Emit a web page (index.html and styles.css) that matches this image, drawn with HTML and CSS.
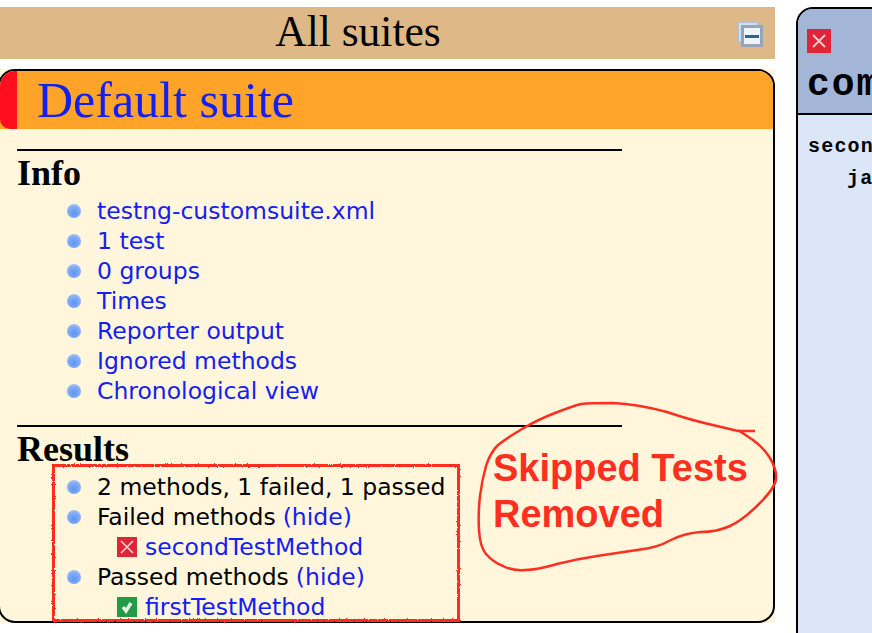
FILE: index.html
```html
<!DOCTYPE html>
<html lang="en">
<head>
    <meta charset="UTF-8">
    <title>TestNG reports</title>
    <link rel="stylesheet" href="styles.css">
</head>
<body>
    <div class="navigator">
        <div class="suites-title">
            <span>All suites</span>
            <svg class="collapse-icon" width="26" height="26" viewBox="0 0 26 26">
                <rect x="1" y="1" width="20" height="20" fill="#cfe0ee" stroke="#abc2d8" stroke-width="2"/>
                <rect x="5.5" y="5.5" width="19" height="19" fill="#eef5fb" stroke="#98a4b8" stroke-width="3"/>
                <rect x="8" y="14" width="14" height="3" fill="#2a6490"/>
            </svg>
        </div>
        <div class="suite-wrap">
            <div class="suite">
                <div class="suite-header">
                    <span class="suite-flag"></span>
                    <a class="suite-name">Default suite</a>
                </div>
                <div class="suite-body">
                    <div class="section">
                        <h3>Info</h3>
                        <ul>
                            <li><a>testng-customsuite.xml</a></li>
                            <li><a>1 test</a></li>
                            <li><a>0 groups</a></li>
                            <li><a>Times</a></li>
                            <li><a>Reporter output</a></li>
                            <li><a>Ignored methods</a></li>
                            <li><a>Chronological view</a></li>
                        </ul>
                    </div>
                    <div class="section">
                        <h3>Results</h3>
                        <ul>
                            <li>2 methods, 1 failed, 1 passed</li>
                            <li>Failed methods <a>(hide)</a></li>
                            <li class="method">
                                <svg class="status-icon" width="20" height="20" viewBox="0 0 20 20">
                                    <rect width="20" height="20" fill="#de2636"/>
                                    <path d="M4 4 L16 16 M16 4 L4 16" stroke="#f6cfd3" stroke-width="1.6"/>
                                </svg>
                                <a>secondTestMethod</a>
                            </li>
                            <li>Passed methods <a>(hide)</a></li>
                            <li class="method">
                                <svg class="status-icon" width="20" height="20" viewBox="0 0 20 20">
                                    <rect width="20" height="20" fill="#259a46"/>
                                    <path d="M6 10 L9 14 L14 6" fill="none" stroke="#e6f3e6" stroke-width="3.4"/>
                                </svg>
                                <a>firstTestMethod</a>
                            </li>
                        </ul>
                    </div>
                </div>
            </div>
        </div>
    </div>

    <div class="detail">
        <div class="detail-header">
            <svg class="detail-icon" width="24" height="24" viewBox="0 0 24 24">
                <rect width="24" height="24" fill="#de2636"/>
                <path d="M6 6 L18 18 M18 6 L6 18" stroke="#f6cfd3" stroke-width="1.8"/>
            </svg>
            <div class="detail-class">com</div>
        </div>
        <div class="detail-body">
            <div>secon</div>
            <div class="detail-trace">ja</div>
        </div>
    </div>

    <!-- annotations drawn on top of the screenshot -->
    <svg class="note-circle" width="872" height="633" viewBox="0 0 872 633">
        <filter id="rough">
            <feTurbulence type="fractalNoise" baseFrequency="0.7" numOctaves="2"/>
            <feDisplacementMap in="SourceGraphic" scale="2.5"/>
        </filter>
        <rect x="53.5" y="465.5" width="405" height="155" fill="none" stroke="#ff2f1f" stroke-width="3" filter="url(#rough)"/>
        <path d="M755 431 H738 L717 426 Q690 420 667 412 Q637 404 613 403 Q590 403 581 404 Q573 406 555 413 Q537 420 522 429 Q507 438 498 445 Q490 453 486 466 Q482 480 480 496 Q478 513 479 530 Q480 547 486 554 Q493 562 503 566 Q513 571 525 570 Q537 570 557 564 Q577 559 597 556 Q617 553 637 550 Q657 548 671 540 Q685 533 701 532 Q717 532 730 526 Q743 520 759 504 Q775 488 776 479 Q777 470 770 458 Q763 447 753 440 L738 430"
              fill="none" stroke="#ff2f1f" stroke-width="2.5"/>
    </svg>
    <div class="note-text">Skipped Tests<br>Removed</div>
</body>
</html>
```

FILE: styles.css
```css
html, body {
    height: 633px;
    overflow: hidden;
}

body {
    margin: 0;
    background-color: #fff;
    color: #000;
    font-family: "DejaVu Sans", sans-serif;
    display: flex;
    align-items: flex-start;
    gap: 21px;
    position: relative;
}

a {
    color: #1420f0;
}

.navigator {
    width: 775px;
    flex-shrink: 0;
    padding-top: 7px;
}

.suites-title {
    height: 52px;
    padding-right: 59px;
    background-color: #deb887;
    font-family: "Liberation Serif", serif;
    font-size: 43.5px;
    line-height: 48px;
    display: flex;
    justify-content: center;
    align-items: flex-start;
    position: relative;
}

.collapse-icon {
    position: absolute;
    top: 14px;
    right: 12px;
}

.suite-wrap {
    margin-top: 10px;
    height: 554px;
    background-color: #fff6dc;
    overflow: hidden;
}

.suite {
    margin-left: -2px;
    height: 550px;
    border: 2px solid #000;
    border-radius: 17px;
    overflow: hidden;
}

.suite-header {
    height: 58px;
    background-color: #ffa428;
    display: flex;
    align-items: center;
}

.suite-flag {
    width: 17px;
    height: 100%;
    background-color: #ff0f1e;
    border-radius: 0 0 0 10px;
}

.suite-name {
    margin-left: 20px;
    font-family: "Liberation Serif", serif;
    font-size: 50px;
    line-height: 58px;
}

.suite-body {
    padding: 20px 0 0 17px;
}

.section {
    width: 605px;
    border-top: 2px solid #000;
    margin-bottom: 19px;
}

.section h3 {
    margin: 0;
    font-family: "Liberation Serif", serif;
    font-size: 36px;
    line-height: 44px;
    font-weight: bold;
}

.section ul {
    margin: 0;
    padding: 1px 0 0 50px;
    list-style: none;
    font-size: 23.5px;
    line-height: 30px;
    white-space: nowrap;
}

.section li {
    display: flex;
    align-items: center;
    height: 30px;
    gap: 7px;
}

.section li:not(.method)::before {
    content: "";
    width: 14px;
    height: 14px;
    margin-right: 9px;
    border-radius: 50%;
    background: radial-gradient(circle at 50% 65%, #5c93f5 0%, #88b0f6 60%, #c9d9f5 100%);
    flex-shrink: 0;
}

.section li.method {
    padding-left: 50px;
    gap: 8px;
}

.detail {
    flex-shrink: 0;
    width: 120px;
    height: 640px;
    margin-top: 7px;
    border: 2px solid #000;
    border-radius: 17px 0 0 0;
    background-color: #dce6f9;
    overflow: hidden;
    font-family: "Liberation Mono", monospace;
    font-weight: bold;
}

.detail-header {
    height: 106px;
    padding: 20px 0 0 9px;
    box-sizing: border-box;
    background-color: #a3b6d8;
    border-bottom: 2px solid #000;
}

.detail-icon {
    display: block;
}

.detail-class {
    font-size: 38px;
    line-height: 42px;
    letter-spacing: 2px;
    margin-top: 11px;
    white-space: nowrap;
}

.detail-body {
    padding: 16px 0 0 10px;
    font-size: 20px;
    line-height: 32px;
    letter-spacing: 1.2px;
    white-space: nowrap;
}

.detail-trace {
    padding-left: 39px;
}

.note-circle {
    position: absolute;
    left: 0;
    top: 0;
}

.note-text {
    position: absolute;
    left: 493px;
    top: 445px;
    font-family: "Liberation Sans", sans-serif;
    font-size: 38px;
    line-height: 46px;
    font-weight: bold;
    color: #ff2f1f;
    white-space: nowrap;
}
```
